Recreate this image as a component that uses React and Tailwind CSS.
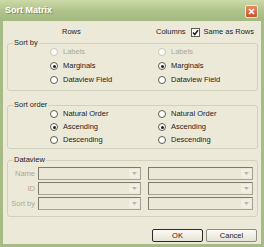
import { useState } from 'react';

const FONT = { fontFamily: '"Liberation Sans", Arial, sans-serif' };

// XP style radio
function Radio({ checked, disabled, label }) {
  return (
    <div className="flex h-[12px] items-center gap-[5px]">
      <span
        className={`flex h-[8px] w-[8px] items-center justify-center rounded-full border bg-white ${
          disabled ? 'border-[#c8c6b6]' : 'border-[#5d5d52]'
        }`}
      >
        {checked && <span className="h-[3px] w-[3px] rounded-full bg-[#1f1f1f]" />}
      </span>
      <span className={disabled ? 'text-[#aca899]' : 'text-[#1c1c1c]'}>{label}</span>
    </div>
  );
}

function Group({ title, children, className = '' }) {
  return (
    <fieldset className={`mx-[3px] ml-[4px] rounded-[3px] border border-[#d0d0bf] px-0 ${className}`}>
      <legend className="ml-[5px] h-[6px] px-[1px] leading-[6px] text-[#1c1c1c]">{title}</legend>
      {children}
    </fieldset>
  );
}

function Combo({ width }) {
  return (
    <div
      className={`flex h-[13px] items-stretch border border-[#a7a592] border-l-[#7c7a68] border-t-[#7c7a68] bg-[#ebe8d7] ${width}`}
    >
      <div className="flex-1" />
      <div className="m-[1px] flex w-[10px] items-center justify-center rounded-[1px] bg-[#f1efe4]">
        <svg width="5" height="3" viewBox="0 0 5 3">
          <path d="M0 0 L5 0 L2.5 3 Z" fill="#b9b7a6" />
        </svg>
      </div>
    </div>
  );
}

function OrderRadios({ value }) {
  return (
    <>
      <Radio label="Natural Order" checked={value === 'natural'} />
      <Radio label="Ascending" checked={value === 'asc'} />
      <Radio label="Descending" checked={value === 'desc'} />
    </>
  );
}

export default function App() {
  const [sameAsRows] = useState(true);

  return (
    <div className="h-[247px] w-[264px] text-[7.5px]" style={FONT}>
      <div className="flex h-full flex-col bg-[#a7bb86] px-[3px] pb-[3px]">
        {/* title bar */}
        <div className="-mx-[3px] flex h-[21px] items-center justify-between bg-gradient-to-b from-[#cddaa9] via-[#b0c48d] to-[#a3b981] pl-[5px] pr-[6px]">
          <span className="text-[9px] font-bold text-white [text-shadow:1px_1px_0_#7e9160]">Sort Matrix</span>
          <span className="mt-[2px] flex h-[13px] w-[13px] items-center justify-center rounded-[2px] border border-[#f3e6dc] bg-gradient-to-b from-[#e88a63] to-[#c9522c]">
            <svg width="7" height="7" viewBox="0 0 7 7">
              <path d="M1 1 L6 6 M6 1 L1 6" stroke="white" strokeWidth="1.6" />
            </svg>
          </span>
        </div>

        <div className="flex flex-1 flex-col bg-[#ece9d8]">
          {/* header */}
          <div className="mt-[5px] flex h-[12px] items-center">
            <span className="ml-[59px] w-[94px] text-[#1c1c1c]">Rows</span>
            <span className="text-[#1c1c1c]">Columns</span>
            <span className="ml-[5px] flex h-[9px] w-[9px] items-center justify-center border border-[#5d5d52] bg-white">
              {sameAsRows && (
                <svg width="7" height="7" viewBox="0 0 7 7">
                  <path d="M1 3.5 L2.8 5.5 L6 1.2" stroke="#1f1f1f" strokeWidth="1.5" fill="none" />
                </svg>
              )}
            </span>
            <span className="ml-[4px] text-[#1c1c1c]">Same as Rows</span>
          </div>

          <Group title="Sort by" className="mt-[2px] pb-[4px]">
            <div className="grid grid-cols-[108px_1fr] gap-y-[2px] pl-[42px]">
              <Radio label="Labels" disabled />
              <Radio label="Labels" disabled />
              <Radio label="Marginals" checked />
              <Radio label="Marginals" checked />
              <Radio label="Dataview Field" />
              <Radio label="Dataview Field" />
            </div>
          </Group>

          <Group title="Sort order" className="mt-[11px] pb-[2px]">
            <div className="grid grid-flow-col grid-cols-[108px_1fr] grid-rows-3 gap-y-[1px] pl-[42px]">
              <OrderRadios value="asc" />
              <OrderRadios value="asc" />
            </div>
          </Group>

          <Group title="Dataview" className="mt-[8px] pb-[6px] pt-[4px]">
            <div className="flex flex-col gap-[2px]">
              {['Name', 'ID', 'Sort by'].map((l) => (
                <div key={l} className="flex items-center">
                  <span className="w-[28px] pr-[1px] text-right text-[#aca899]">{l}</span>
                  <span className="ml-[2px]">
                    <Combo width="w-[103px]" />
                  </span>
                  <span className="ml-[7px]">
                    <Combo width="w-[105px]" />
                  </span>
                </div>
              ))}
            </div>
          </Group>

          {/* buttons */}
          <div className="mr-[4px] mt-[12px] flex justify-end gap-[3px]">
            <button className="h-[13px] w-[51px] rounded-[2px] border border-[#2c2c24] bg-gradient-to-b from-[#fbfaf6] to-[#e6e3d3] text-[#1c1c1c]">
              OK
            </button>
            <button className="h-[13px] w-[51px] rounded-[2px] border border-[#8f8d7c] bg-gradient-to-b from-[#fbfaf6] to-[#e6e3d3] text-[#1c1c1c]">
              Cancel
            </button>
          </div>
        </div>
      </div>
    </div>
  );
}
